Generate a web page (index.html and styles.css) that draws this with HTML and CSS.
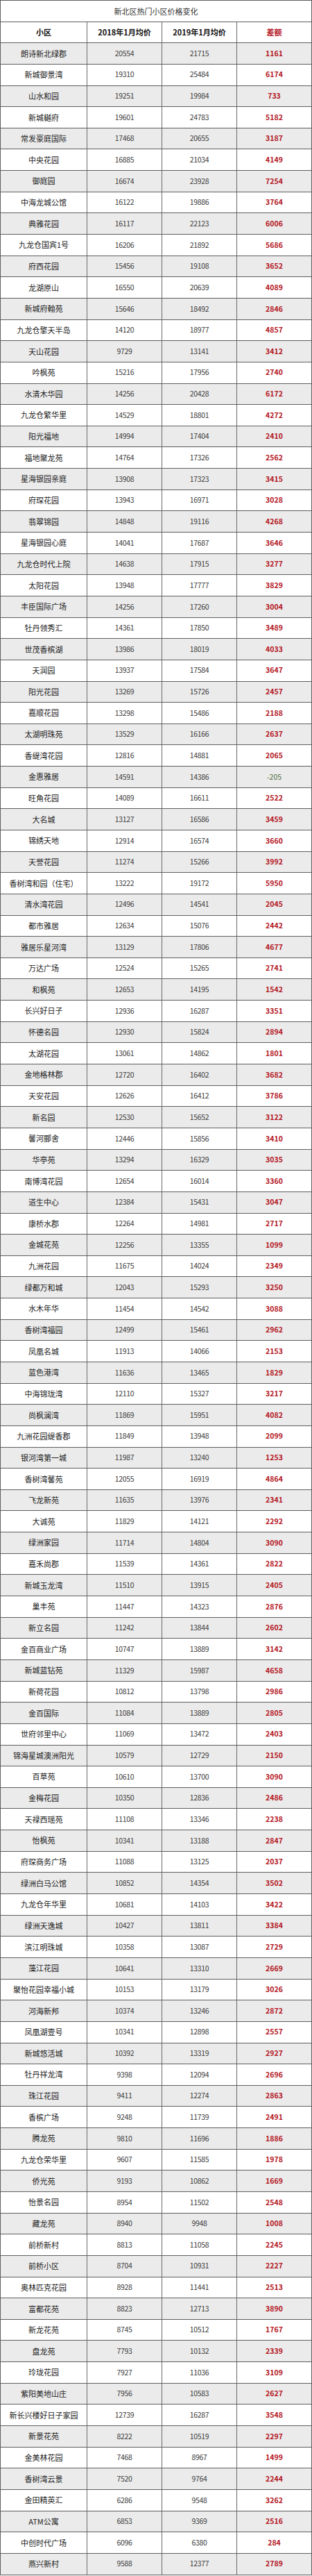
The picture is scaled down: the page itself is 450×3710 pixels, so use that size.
FILE: index.html
```html
<!DOCTYPE html>
<html lang="zh-CN">
<head>
<meta charset="utf-8">
<title>新北区热门小区价格变化</title>
<link rel="stylesheet" href="styles.css">
</head>
<body>
<div class="table">
  <div class="title">新北区热门小区价格变化</div>
  <div class="row head"><div class="c">小区</div><div class="c">2018年1月均价</div><div class="c">2019年1月均价</div><div class="c diff">差额</div></div>
  <div class="row alt"><div class="c name">朗诗新北绿郡</div><div class="c num">20554</div><div class="c num">21715</div><div class="c diff">1161</div></div>
  <div class="row"><div class="c name">新城御景湾</div><div class="c num">19310</div><div class="c num">25484</div><div class="c diff">6174</div></div>
  <div class="row alt"><div class="c name">山水和园</div><div class="c num">19251</div><div class="c num">19984</div><div class="c diff">733</div></div>
  <div class="row"><div class="c name">新城樾府</div><div class="c num">19601</div><div class="c num">24783</div><div class="c diff">5182</div></div>
  <div class="row alt"><div class="c name">常发豪庭国际</div><div class="c num">17468</div><div class="c num">20655</div><div class="c diff">3187</div></div>
  <div class="row"><div class="c name">中央花园</div><div class="c num">16885</div><div class="c num">21034</div><div class="c diff">4149</div></div>
  <div class="row alt"><div class="c name">御庭园</div><div class="c num">16674</div><div class="c num">23928</div><div class="c diff">7254</div></div>
  <div class="row"><div class="c name">中海龙城公馆</div><div class="c num">16122</div><div class="c num">19886</div><div class="c diff">3764</div></div>
  <div class="row alt"><div class="c name">典雅花园</div><div class="c num">16117</div><div class="c num">22123</div><div class="c diff">6006</div></div>
  <div class="row"><div class="c name">九龙仓国宾1号</div><div class="c num">16206</div><div class="c num">21892</div><div class="c diff">5686</div></div>
  <div class="row alt"><div class="c name">府西花园</div><div class="c num">15456</div><div class="c num">19108</div><div class="c diff">3652</div></div>
  <div class="row"><div class="c name">龙湖原山</div><div class="c num">16550</div><div class="c num">20639</div><div class="c diff">4089</div></div>
  <div class="row alt"><div class="c name">新城府翰苑</div><div class="c num">15646</div><div class="c num">18492</div><div class="c diff">2846</div></div>
  <div class="row"><div class="c name">九龙仓擎天半岛</div><div class="c num">14120</div><div class="c num">18977</div><div class="c diff">4857</div></div>
  <div class="row alt"><div class="c name">天山花园</div><div class="c num">9729</div><div class="c num">13141</div><div class="c diff">3412</div></div>
  <div class="row"><div class="c name">吟枫苑</div><div class="c num">15216</div><div class="c num">17956</div><div class="c diff">2740</div></div>
  <div class="row alt"><div class="c name">水清木华园</div><div class="c num">14256</div><div class="c num">20428</div><div class="c diff">6172</div></div>
  <div class="row"><div class="c name">九龙仓繁华里</div><div class="c num">14529</div><div class="c num">18801</div><div class="c diff">4272</div></div>
  <div class="row alt"><div class="c name">阳光福地</div><div class="c num">14994</div><div class="c num">17404</div><div class="c diff">2410</div></div>
  <div class="row"><div class="c name">福地聚龙苑</div><div class="c num">14764</div><div class="c num">17326</div><div class="c diff">2562</div></div>
  <div class="row alt"><div class="c name">星海银园亲庭</div><div class="c num">13908</div><div class="c num">17323</div><div class="c diff">3415</div></div>
  <div class="row"><div class="c name">府琛花园</div><div class="c num">13943</div><div class="c num">16971</div><div class="c diff">3028</div></div>
  <div class="row alt"><div class="c name">翡翠锦园</div><div class="c num">14848</div><div class="c num">19116</div><div class="c diff">4268</div></div>
  <div class="row"><div class="c name">星海银园心庭</div><div class="c num">14041</div><div class="c num">17687</div><div class="c diff">3646</div></div>
  <div class="row alt"><div class="c name">九龙仓时代上院</div><div class="c num">14638</div><div class="c num">17915</div><div class="c diff">3277</div></div>
  <div class="row"><div class="c name">太阳花园</div><div class="c num">13948</div><div class="c num">17777</div><div class="c diff">3829</div></div>
  <div class="row alt"><div class="c name">丰臣国际广场</div><div class="c num">14256</div><div class="c num">17260</div><div class="c diff">3004</div></div>
  <div class="row"><div class="c name">牡丹领秀汇</div><div class="c num">14361</div><div class="c num">17850</div><div class="c diff">3489</div></div>
  <div class="row alt"><div class="c name">世茂香槟湖</div><div class="c num">13986</div><div class="c num">18019</div><div class="c diff">4033</div></div>
  <div class="row"><div class="c name">天润园</div><div class="c num">13937</div><div class="c num">17584</div><div class="c diff">3647</div></div>
  <div class="row alt"><div class="c name">阳光花园</div><div class="c num">13269</div><div class="c num">15726</div><div class="c diff">2457</div></div>
  <div class="row"><div class="c name">嘉顺花园</div><div class="c num">13298</div><div class="c num">15486</div><div class="c diff">2188</div></div>
  <div class="row alt"><div class="c name">太湖明珠苑</div><div class="c num">13529</div><div class="c num">16166</div><div class="c diff">2637</div></div>
  <div class="row"><div class="c name">香缇湾花园</div><div class="c num">12816</div><div class="c num">14881</div><div class="c diff">2065</div></div>
  <div class="row alt"><div class="c name">金惠雅居</div><div class="c num">14591</div><div class="c num">14386</div><div class="c neg">-205</div></div>
  <div class="row"><div class="c name">旺角花园</div><div class="c num">14089</div><div class="c num">16611</div><div class="c diff">2522</div></div>
  <div class="row alt"><div class="c name">大名城</div><div class="c num">13127</div><div class="c num">16586</div><div class="c diff">3459</div></div>
  <div class="row"><div class="c name">锦绣天地</div><div class="c num">12914</div><div class="c num">16574</div><div class="c diff">3660</div></div>
  <div class="row alt"><div class="c name">天誉花园</div><div class="c num">11274</div><div class="c num">15266</div><div class="c diff">3992</div></div>
  <div class="row"><div class="c name">香树湾和园（住宅）</div><div class="c num">13222</div><div class="c num">19172</div><div class="c diff">5950</div></div>
  <div class="row alt"><div class="c name">清水湾花园</div><div class="c num">12496</div><div class="c num">14541</div><div class="c diff">2045</div></div>
  <div class="row"><div class="c name">都市雅居</div><div class="c num">12634</div><div class="c num">15076</div><div class="c diff">2442</div></div>
  <div class="row alt"><div class="c name">雅居乐星河湾</div><div class="c num">13129</div><div class="c num">17806</div><div class="c diff">4677</div></div>
  <div class="row"><div class="c name">万达广场</div><div class="c num">12524</div><div class="c num">15265</div><div class="c diff">2741</div></div>
  <div class="row alt"><div class="c name">和枫苑</div><div class="c num">12653</div><div class="c num">14195</div><div class="c diff">1542</div></div>
  <div class="row"><div class="c name">长兴好日子</div><div class="c num">12936</div><div class="c num">16287</div><div class="c diff">3351</div></div>
  <div class="row alt"><div class="c name">怀德名园</div><div class="c num">12930</div><div class="c num">15824</div><div class="c diff">2894</div></div>
  <div class="row"><div class="c name">太湖花园</div><div class="c num">13061</div><div class="c num">14862</div><div class="c diff">1801</div></div>
  <div class="row alt"><div class="c name">金地格林郡</div><div class="c num">12720</div><div class="c num">16402</div><div class="c diff">3682</div></div>
  <div class="row"><div class="c name">天安花园</div><div class="c num">12626</div><div class="c num">16412</div><div class="c diff">3786</div></div>
  <div class="row alt"><div class="c name">新名园</div><div class="c num">12530</div><div class="c num">15652</div><div class="c diff">3122</div></div>
  <div class="row"><div class="c name">馨河郦舍</div><div class="c num">12446</div><div class="c num">15856</div><div class="c diff">3410</div></div>
  <div class="row alt"><div class="c name">华亭苑</div><div class="c num">13294</div><div class="c num">16329</div><div class="c diff">3035</div></div>
  <div class="row"><div class="c name">南博湾花园</div><div class="c num">12654</div><div class="c num">16014</div><div class="c diff">3360</div></div>
  <div class="row alt"><div class="c name">道生中心</div><div class="c num">12384</div><div class="c num">15431</div><div class="c diff">3047</div></div>
  <div class="row"><div class="c name">康桥水郡</div><div class="c num">12264</div><div class="c num">14981</div><div class="c diff">2717</div></div>
  <div class="row alt"><div class="c name">金城花苑</div><div class="c num">12256</div><div class="c num">13355</div><div class="c diff">1099</div></div>
  <div class="row"><div class="c name">九洲花园</div><div class="c num">11675</div><div class="c num">14024</div><div class="c diff">2349</div></div>
  <div class="row alt"><div class="c name">绿都万和城</div><div class="c num">12043</div><div class="c num">15293</div><div class="c diff">3250</div></div>
  <div class="row"><div class="c name">水木年华</div><div class="c num">11454</div><div class="c num">14542</div><div class="c diff">3088</div></div>
  <div class="row alt"><div class="c name">香树湾福园</div><div class="c num">12499</div><div class="c num">15461</div><div class="c diff">2962</div></div>
  <div class="row"><div class="c name">凤凰名城</div><div class="c num">11913</div><div class="c num">14066</div><div class="c diff">2153</div></div>
  <div class="row alt"><div class="c name">蓝色港湾</div><div class="c num">11636</div><div class="c num">13465</div><div class="c diff">1829</div></div>
  <div class="row"><div class="c name">中海锦珑湾</div><div class="c num">12110</div><div class="c num">15327</div><div class="c diff">3217</div></div>
  <div class="row alt"><div class="c name">尚枫澜湾</div><div class="c num">11869</div><div class="c num">15951</div><div class="c diff">4082</div></div>
  <div class="row"><div class="c name">九洲花园缇香郡</div><div class="c num">11849</div><div class="c num">13948</div><div class="c diff">2099</div></div>
  <div class="row alt"><div class="c name">银河湾第一城</div><div class="c num">11987</div><div class="c num">13240</div><div class="c diff">1253</div></div>
  <div class="row"><div class="c name">香树湾馨苑</div><div class="c num">12055</div><div class="c num">16919</div><div class="c diff">4864</div></div>
  <div class="row alt"><div class="c name">飞龙新苑</div><div class="c num">11635</div><div class="c num">13976</div><div class="c diff">2341</div></div>
  <div class="row"><div class="c name">大诚苑</div><div class="c num">11829</div><div class="c num">14121</div><div class="c diff">2292</div></div>
  <div class="row alt"><div class="c name">绿洲家园</div><div class="c num">11714</div><div class="c num">14804</div><div class="c diff">3090</div></div>
  <div class="row"><div class="c name">嘉禾尚郡</div><div class="c num">11539</div><div class="c num">14361</div><div class="c diff">2822</div></div>
  <div class="row alt"><div class="c name">新城玉龙湾</div><div class="c num">11510</div><div class="c num">13915</div><div class="c diff">2405</div></div>
  <div class="row"><div class="c name">巢丰苑</div><div class="c num">11447</div><div class="c num">14323</div><div class="c diff">2876</div></div>
  <div class="row alt"><div class="c name">新立名园</div><div class="c num">11242</div><div class="c num">13844</div><div class="c diff">2602</div></div>
  <div class="row"><div class="c name">金百商业广场</div><div class="c num">10747</div><div class="c num">13889</div><div class="c diff">3142</div></div>
  <div class="row alt"><div class="c name">新城蓝钻苑</div><div class="c num">11329</div><div class="c num">15987</div><div class="c diff">4658</div></div>
  <div class="row"><div class="c name">新荷花园</div><div class="c num">10812</div><div class="c num">13798</div><div class="c diff">2986</div></div>
  <div class="row alt"><div class="c name">金百国际</div><div class="c num">11084</div><div class="c num">13889</div><div class="c diff">2805</div></div>
  <div class="row"><div class="c name">世府邻里中心</div><div class="c num">11069</div><div class="c num">13472</div><div class="c diff">2403</div></div>
  <div class="row alt"><div class="c name">锦海星城澳洲阳光</div><div class="c num">10579</div><div class="c num">12729</div><div class="c diff">2150</div></div>
  <div class="row"><div class="c name">百草苑</div><div class="c num">10610</div><div class="c num">13700</div><div class="c diff">3090</div></div>
  <div class="row alt"><div class="c name">金梅花园</div><div class="c num">10350</div><div class="c num">12836</div><div class="c diff">2486</div></div>
  <div class="row"><div class="c name">天禄西瑶苑</div><div class="c num">11108</div><div class="c num">13346</div><div class="c diff">2238</div></div>
  <div class="row alt"><div class="c name">怡枫苑</div><div class="c num">10341</div><div class="c num">13188</div><div class="c diff">2847</div></div>
  <div class="row"><div class="c name">府琛商务广场</div><div class="c num">11088</div><div class="c num">13125</div><div class="c diff">2037</div></div>
  <div class="row alt"><div class="c name">绿洲白马公馆</div><div class="c num">10852</div><div class="c num">14354</div><div class="c diff">3502</div></div>
  <div class="row"><div class="c name">九龙仓年华里</div><div class="c num">10681</div><div class="c num">14103</div><div class="c diff">3422</div></div>
  <div class="row alt"><div class="c name">绿洲天逸城</div><div class="c num">10427</div><div class="c num">13811</div><div class="c diff">3384</div></div>
  <div class="row"><div class="c name">滨江明珠城</div><div class="c num">10358</div><div class="c num">13087</div><div class="c diff">2729</div></div>
  <div class="row alt"><div class="c name">藻江花园</div><div class="c num">10641</div><div class="c num">13310</div><div class="c diff">2669</div></div>
  <div class="row"><div class="c name">聚怡花园幸福小城</div><div class="c num">10153</div><div class="c num">13179</div><div class="c diff">3026</div></div>
  <div class="row alt"><div class="c name">河海新邦</div><div class="c num">10374</div><div class="c num">13246</div><div class="c diff">2872</div></div>
  <div class="row"><div class="c name">凤凰湖壹号</div><div class="c num">10341</div><div class="c num">12898</div><div class="c diff">2557</div></div>
  <div class="row alt"><div class="c name">新城悠活城</div><div class="c num">10392</div><div class="c num">13319</div><div class="c diff">2927</div></div>
  <div class="row"><div class="c name">牡丹祥龙湾</div><div class="c num">9398</div><div class="c num">12094</div><div class="c diff">2696</div></div>
  <div class="row alt"><div class="c name">珠江花园</div><div class="c num">9411</div><div class="c num">12274</div><div class="c diff">2863</div></div>
  <div class="row"><div class="c name">香槟广场</div><div class="c num">9248</div><div class="c num">11739</div><div class="c diff">2491</div></div>
  <div class="row alt"><div class="c name">腾龙苑</div><div class="c num">9810</div><div class="c num">11696</div><div class="c diff">1886</div></div>
  <div class="row"><div class="c name">九龙仓荣华里</div><div class="c num">9607</div><div class="c num">11585</div><div class="c diff">1978</div></div>
  <div class="row alt"><div class="c name">侨光苑</div><div class="c num">9193</div><div class="c num">10862</div><div class="c diff">1669</div></div>
  <div class="row"><div class="c name">怡景名园</div><div class="c num">8954</div><div class="c num">11502</div><div class="c diff">2548</div></div>
  <div class="row alt"><div class="c name">藏龙苑</div><div class="c num">8940</div><div class="c num">9948</div><div class="c diff">1008</div></div>
  <div class="row"><div class="c name">前桥新村</div><div class="c num">8813</div><div class="c num">11058</div><div class="c diff">2245</div></div>
  <div class="row alt"><div class="c name">前桥小区</div><div class="c num">8704</div><div class="c num">10931</div><div class="c diff">2227</div></div>
  <div class="row"><div class="c name">奥林匹克花园</div><div class="c num">8928</div><div class="c num">11441</div><div class="c diff">2513</div></div>
  <div class="row alt"><div class="c name">富都花苑</div><div class="c num">8823</div><div class="c num">12713</div><div class="c diff">3890</div></div>
  <div class="row"><div class="c name">新龙花苑</div><div class="c num">8745</div><div class="c num">10512</div><div class="c diff">1767</div></div>
  <div class="row alt"><div class="c name">盘龙苑</div><div class="c num">7793</div><div class="c num">10132</div><div class="c diff">2339</div></div>
  <div class="row"><div class="c name">玲珑花园</div><div class="c num">7927</div><div class="c num">11036</div><div class="c diff">3109</div></div>
  <div class="row alt"><div class="c name">紫阳美地山庄</div><div class="c num">7956</div><div class="c num">10583</div><div class="c diff">2627</div></div>
  <div class="row"><div class="c name">新长兴楼好日子家园</div><div class="c num">12739</div><div class="c num">16287</div><div class="c diff">3548</div></div>
  <div class="row alt"><div class="c name">新景花苑</div><div class="c num">8222</div><div class="c num">10519</div><div class="c diff">2297</div></div>
  <div class="row"><div class="c name">金美林花园</div><div class="c num">7468</div><div class="c num">8967</div><div class="c diff">1499</div></div>
  <div class="row alt"><div class="c name">香树湾云景</div><div class="c num">7520</div><div class="c num">9764</div><div class="c diff">2244</div></div>
  <div class="row"><div class="c name">金田精英汇</div><div class="c num">6286</div><div class="c num">9548</div><div class="c diff">3262</div></div>
  <div class="row alt"><div class="c name">ATM公寓</div><div class="c num">6853</div><div class="c num">9369</div><div class="c diff">2516</div></div>
  <div class="row"><div class="c name">中创时代广场</div><div class="c num">6096</div><div class="c num">6380</div><div class="c diff">284</div></div>
  <div class="row alt"><div class="c name">燕兴新村</div><div class="c num">9588</div><div class="c num">12377</div><div class="c diff">2789</div></div>
</div>
</body>
</html>
```

FILE: styles.css
```css
html, body {
  margin: 0;
  padding: 0;
  background: #ffffff;
}

body {
  font-family: "Noto Sans CJK SC", "Noto Sans", sans-serif;
  font-size: 11px;
  color: #222222;
}

.table {
  width: 450px;
  box-sizing: border-box;
  border-top: 1px solid #5e5e5e;
  border-left: 1px solid #5e5e5e;
  border-right: 1px solid #5e5e5e;
}

.title {
  height: 30.65px;
  box-sizing: border-box;
  border-bottom: 1px solid #5e5e5e;
  display: flex;
  align-items: center;
  justify-content: center;
  font-size: 11px;
  color: #333333;
  background: #ffffff;
}

.row {
  display: grid;
  grid-template-columns: 125px 108px 108px 1fr;
  height: 30.65px;
  box-sizing: border-box;
  border-bottom: 1px solid #5e5e5e;
  background: #ffffff;
}

.row.alt {
  background: #ebebeb;
}

.c {
  display: flex;
  align-items: center;
  justify-content: center;
  box-sizing: border-box;
  border-right: 1px solid #6a6a6a;
  white-space: nowrap;
  line-height: 1;
}

.c:last-child {
  border-right: none;
}

.head .c {
  font-weight: bold;
  color: #111111;
  font-size: 11px;
}

.head .c.diff {
  color: #b3151f;
}

.name {
  color: #222222;
  font-size: 11px;
}

.num {
  color: #3c3c3c;
  font-size: 10.5px;
  letter-spacing: -0.3px;
}

.diff {
  color: #b3151f;
  font-weight: bold;
  font-size: 10.5px;
}

.neg {
  color: #4f6b3c;
  font-size: 10.5px;
}
```
